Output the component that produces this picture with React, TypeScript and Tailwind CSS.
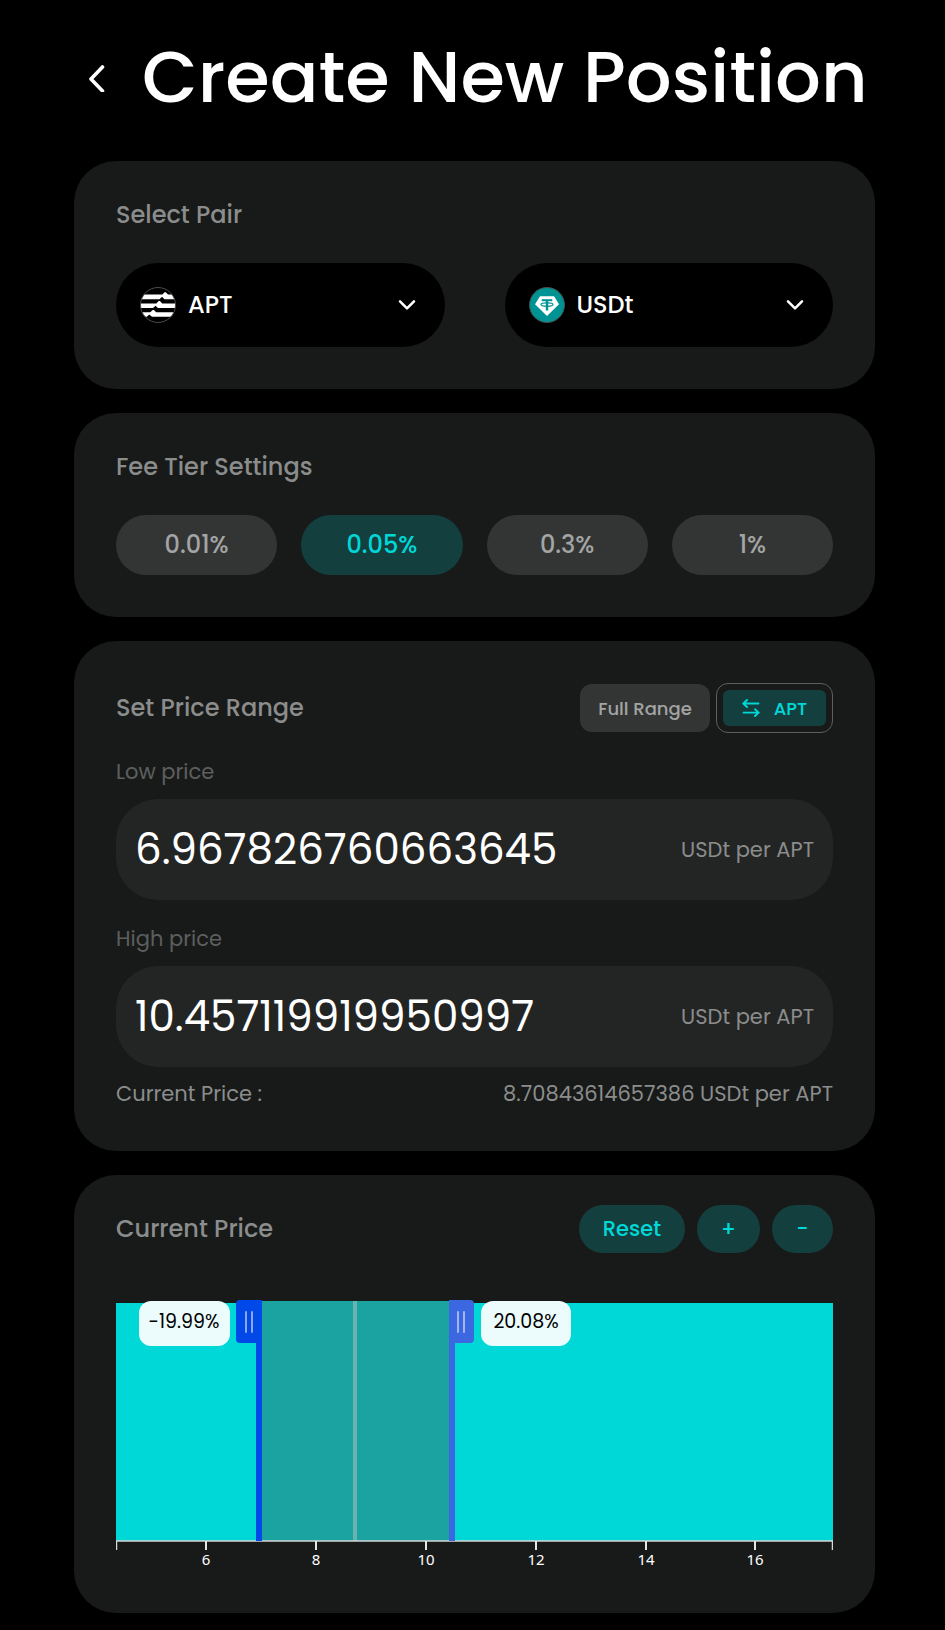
import { useId, useState } from "react";

const FEE_TIERS = ["0.01%", "0.05%", "0.3%", "1%"];

const TICKS = [
  { x: 90, label: "6" },
  { x: 200, label: "8" },
  { x: 310, label: "10" },
  { x: 420, label: "12" },
  { x: 530, label: "14" },
  { x: 639, label: "16" },
];

function AptosIcon() {
  return (
    <svg viewBox="0 0 36 36" className="size-9 shrink-0" aria-hidden="true">
      <clipPath id="aptos-disc">
        <circle cx="18" cy="18" r="17.5" />
      </clipPath>
      <circle cx="18" cy="18" r="17.5" fill="#000" />
      <g clipPath="url(#aptos-disc)" fill="#fff">
        <path d="M0 7.5H22.3L24.6 5.3H25.8L28 7.5H36V12.3H24.5L22 9.8L19.5 12.3H0Z" />
        <path d="M0 16.4H16.3L18.7 14.1H19.9L22.2 16.4H36V21H18L15.5 18.7L13 21H0Z" />
        <path d="M0 25.2H10.3L12.7 22.9H13.9L16.2 25.2H36V29.8H12L9.3 27.5L6.8 29.8H0Z" />
      </g>
      <circle cx="18" cy="18" r="17.5" fill="none" stroke="#4b4c4c" />
    </svg>
  );
}

function TetherIcon() {
  return (
    <svg viewBox="0 0 36 36" className="size-9 shrink-0" aria-hidden="true">
      <circle cx="18" cy="18" r="17.5" fill="#009393" stroke="#4b4c4c" />
      <path d="M11 9.3H25L30 17.2L18 29L6 17.2Z" fill="#fff" />
      <g fill="none" stroke="#009393">
        <path d="M12.7 13.2H23.3" strokeWidth="2" />
        <path d="M18 13V23.5" strokeWidth="2.4" />
        <ellipse cx="18" cy="17.6" rx="6" ry="1.7" strokeWidth="1.2" />
      </g>
    </svg>
  );
}

function ChevronDown() {
  return (
    <svg viewBox="0 0 18 12" className="pointer-events-none h-3 w-[18px] shrink-0" aria-hidden="true">
      <path d="M2 2.3L9 9.3L16 2.3" fill="none" stroke="#fff" strokeWidth="2.5" strokeLinecap="round" strokeLinejoin="round" />
    </svg>
  );
}

function TokenSelect({ label, icon, options }: { label: string; icon: React.ReactNode; options: string[] }) {
  return (
    <label className="flex h-[84px] flex-1 items-center gap-3 rounded-[42px] bg-black pr-[29px] pl-6">
      {icon}
      <select
        aria-label={label}
        className="min-w-0 flex-1 cursor-pointer appearance-none bg-transparent text-[24px] font-medium text-white outline-none"
      >
        {options.map((o) => (
          <option key={o} className="bg-black">
            {o}
          </option>
        ))}
      </select>
      <ChevronDown />
    </label>
  );
}

function PriceField({ label, initial }: { label: string; initial: string }) {
  const id = useId();
  const [value, setValue] = useState(initial);
  return (
    <div className="mt-[22px]">
      <label htmlFor={id} className="block text-[21px] leading-[33px] text-[#5d5f5e]">
        {label}
      </label>
      <div className="mt-[11px] flex h-[101px] items-center rounded-[42px] bg-[#232524] px-[19px]">
        <input
          id={id}
          value={value}
          onChange={(e) => setValue(e.target.value)}
          className="min-w-0 flex-1 bg-transparent text-[42px] text-white outline-none"
        />
        <span className="shrink-0 text-[21px] text-[#8b8d8c]">USDt per APT</span>
      </div>
    </div>
  );
}

function RangeChart() {
  return (
    <svg viewBox="0 0 717 275" className="mt-[45px] block w-full" role="img" aria-label="Liquidity price range">
      <rect x="0" y="5" width="717" height="238" fill="#00d8d8" />
      <rect x="146" y="3" width="187" height="240" fill="#1ba3a1" />
      <rect x="237" y="3" width="4" height="240" fill="#69b3b0" />
      <path d="M0.5 252V243H716.5V252" fill="none" stroke="#d5d8d7" strokeWidth="1.5" />
      {TICKS.map((t) => (
        <g key={t.label}>
          <path d={`M${t.x} 243V252`} stroke="#e6e6e6" strokeWidth="2" />
          <text x={t.x} y="267" textAnchor="middle" fill="#fff" className="font-['Noto_Sans',sans-serif] text-[15px]">
            {t.label}
          </text>
        </g>
      ))}
      <path d="M124 2H146V243H140V45H124Q120 45 120 41V6Q120 2 124 2Z" fill="#0048e8" />
      <path d="M130 14V34M136 14V34" stroke="#8ba6f4" strokeWidth="2" strokeLinecap="round" />
      <path d="M333 2H354Q358 2 358 6V41Q358 45 354 45H339V243H333Z" fill="#3b67e0" />
      <path d="M342 14V34M348 14V34" stroke="#a4b6ef" strokeWidth="2" strokeLinecap="round" />
      <rect x="23" y="3" width="91" height="45" rx="12" fill="#ecfcfc" />
      <text x="68" y="30" textAnchor="middle" fill="#000" className="text-[19px]">
        -19.99%
      </text>
      <rect x="365" y="3" width="90" height="45" rx="12" fill="#ecfcfc" />
      <text x="410" y="30" textAnchor="middle" fill="#000" className="text-[19px]">
        20.08%
      </text>
    </svg>
  );
}

export default function App() {
  const [fee, setFee] = useState("0.05%");
  return (
    <main className="min-h-screen bg-black pr-[70px] pb-[17px] pl-[74px] font-['Poppins','Inter',sans-serif] text-[#8b8d8c]">
      <header className="flex h-[161px] items-center gap-9 pb-2 pl-3">
        <button aria-label="Back" className="shrink-0">
          <svg viewBox="0 0 20 30" className="h-[30px] w-5" aria-hidden="true">
            <path d="M16.5 5L5 17L16.5 29" fill="none" stroke="#fff" strokeWidth="3.6" strokeLinecap="round" strokeLinejoin="round" overflow="visible" />
          </svg>
        </button>
        <h1 className="text-[72px] leading-none font-medium whitespace-nowrap text-white">Create New Position</h1>
      </header>

      <div className="flex flex-col gap-6">
        <section className="rounded-[42px] bg-[#181a19] px-[42px] pt-9 pb-[42px]">
          <h2 className="text-[24px] leading-9 font-medium">Select Pair</h2>
          <div className="mt-[30px] flex gap-[60px]">
            <TokenSelect label="First token" icon={<AptosIcon />} options={["APT", "USDt"]} />
            <TokenSelect label="Second token" icon={<TetherIcon />} options={["USDt", "APT"]} />
          </div>
        </section>

        <section className="rounded-[42px] bg-[#181a19] px-[42px] pt-9 pb-[42px]">
          <h2 className="text-[24px] leading-9 font-medium">Fee Tier Settings</h2>
          <div className="mt-[30px] grid grid-cols-4 gap-6">
            {FEE_TIERS.map((t) => (
              <button
                key={t}
                onClick={() => setFee(t)}
                aria-pressed={fee === t}
                className={
                  fee === t
                    ? "h-[60px] rounded-full bg-[#143f3f] text-[24px] font-medium text-[#00d8d8]"
                    : "h-[60px] rounded-full bg-[#333534] text-[24px] font-medium text-[#a3a4a4]"
                }
              >
                {t}
              </button>
            ))}
          </div>
        </section>

        <section className="rounded-[42px] bg-[#181a19] px-[42px] pt-[42px] pb-[41px]">
          <div className="flex items-center justify-between">
            <h2 className="text-[24px] leading-9 font-medium">Set Price Range</h2>
            <div className="flex items-center gap-1.5">
              <button className="h-12 w-[130px] rounded-xl bg-[#333534] text-[18px] font-medium text-[#a3a4a4]">Full Range</button>
              <div className="rounded-xl border border-[#5d5f5e] p-1.5">
                <button className="flex h-9 w-[103px] items-center justify-center gap-3.5 rounded-md bg-[#143f3f] text-[18px] font-medium text-[#00d8d8]">
                  <svg viewBox="0 0 18 18" className="size-[18px]" aria-hidden="true">
                    <path
                      d="M5 1L1.3 4.5L5 8M1.3 4.5H16.5M13 10.3L16.7 13.6L13 17M16.7 13.6H1.5"
                      fill="none"
                      stroke="currentColor"
                      strokeWidth="1.9"
                      strokeLinecap="round"
                      strokeLinejoin="round"
                    />
                  </svg>
                  APT
                </button>
              </div>
            </div>
          </div>
          <PriceField label="Low price" initial="6.967826760663645" />
          <PriceField label="High price" initial="10.457119919950997" />
          <div className="mt-2.5 flex justify-between text-[21px] leading-[33px]">
            <span>Current Price :</span>
            <span>8.70843614657386 USDt per APT</span>
          </div>
        </section>

        <section className="rounded-[42px] bg-[#181a19] px-[42px] pt-[30px] pb-10">
          <div className="flex items-center justify-between">
            <h2 className="text-[24px] leading-9 font-medium">Current Price</h2>
            <div className="flex gap-3 text-[21px] font-medium text-[#00d8d8]">
              <button className="h-12 rounded-full bg-[#143f3f] px-6">Reset</button>
              <button aria-label="Zoom in" className="h-12 w-[63px] rounded-full bg-[#143f3f]">
                +
              </button>
              <button aria-label="Zoom out" className="h-12 w-[61px] rounded-full bg-[#143f3f]">
                -
              </button>
            </div>
          </div>
          <RangeChart />
        </section>
      </div>
    </main>
  );
}
